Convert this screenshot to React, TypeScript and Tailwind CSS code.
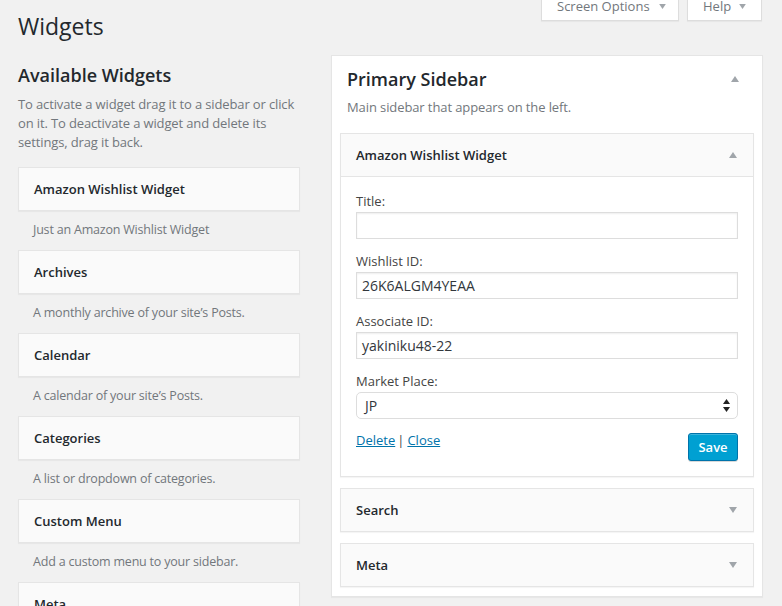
import React from "react";

const Tri = ({ up, color = "#a0a5aa", w = 8, h = 6 }: { up?: boolean; color?: string; w?: number; h?: number }) => (
  <svg width={w} height={h} viewBox="0 0 8 6" className="shrink-0">
    <path d={up ? "M4 0L8 6H0Z" : "M0 0H8L4 6Z"} fill={color} />
  </svg>
);

const available = [
  { t: "Amazon Wishlist Widget", d: "Just an Amazon Wishlist Widget" },
  { t: "Archives", d: "A monthly archive of your site\u2019s Posts." },
  { t: "Calendar", d: "A calendar of your site\u2019s Posts." },
  { t: "Categories", d: "A list or dropdown of categories." },
  { t: "Custom Menu", d: "Add a custom menu to your sidebar." },
  { t: "Meta", d: "Login, RSS, & WordPress.org links." },
];

const Field = ({ label, value }: { label: string; value: string }) => (
  <div>
    <label className="block text-[13px] leading-[19px] text-[#444]">{label}</label>
    <div className="mt-[1px] h-[27px] border border-[#ddd] bg-white shadow-[inset_0_1px_2px_rgba(0,0,0,0.07)] px-[5px] flex items-center text-[14px] text-[#32373c]">
      {value}
    </div>
  </div>
);

const ClosedWidget = ({ title }: { title: string }) => (
  <div className="mt-[11px] border border-[#e5e5e5] bg-[#fafafa] shadow-[0_1px_1px_rgba(0,0,0,0.04)] pl-[15px] pr-[16px] py-[14px] flex items-center justify-between">
    <span className="text-[13px] leading-[14px] font-semibold text-[#23282d]">{title}</span>
    <Tri />
  </div>
);

export default function App() {
  return (
    <div className="h-[606px] overflow-hidden bg-[#f1f1f1] font-['Open_Sans',sans-serif] text-[#444]">
      <div className="flex justify-between pl-[18px] pr-[20px]">
        <h1 className="mt-[11px] text-[23px] leading-[30px] text-[#23282d]">Widgets</h1>
        <div className="flex gap-[8px] -mt-[7px] h-[28px]">
          <div className="w-[138px] h-[28px] bg-white border border-[#ddd] border-t-0 shadow-[0_1px_1px_rgba(0,0,0,0.04)] pl-[15px] flex items-center gap-[9px] text-[13px] leading-[19px] text-[#72777c]">
            <span>Screen Options</span>
            <Tri color="#a0a5aa" w={7} h={5} />
          </div>
          <div className="w-[75px] h-[28px] bg-white border border-[#ddd] border-t-0 shadow-[0_1px_1px_rgba(0,0,0,0.04)] pl-[15px] flex items-center gap-[8px] text-[13px] leading-[19px] text-[#72777c]">
            <span>Help</span>
            <Tri color="#a0a5aa" w={7} h={5} />
          </div>
        </div>
      </div>

      <div className="flex pl-[18px] pr-[19px] mt-[14px] gap-[31px] items-start">
        <div className="w-[282px] shrink-0 mt-[8px]">
          <h2 className="text-[18px] leading-[24px] font-semibold text-[#23282d]">Available Widgets</h2>
          <p className="mt-[8px] text-[13px] leading-[19px] tracking-[-0.13px] text-[#72777c]">
            To activate a widget drag it to a sidebar or click on it. To deactivate a widget and delete its settings, drag it back.
          </p>
          <div className="mt-[15px]">
            {available.map((w) => (
              <div key={w.t}>
                <div className="border border-[#e5e5e5] bg-[#fafafa] shadow-[0_1px_1px_rgba(0,0,0,0.04)] px-[15px] py-[14px] text-[13px] leading-[14px] font-semibold text-[#23282d]">
                  {w.t}
                </div>
                <div className="px-[15px] pt-[9px] pb-[11px] text-[12.5px] leading-[19px] tracking-[-0.2px] text-[#72777c]">{w.d}</div>
              </div>
            ))}
          </div>
        </div>

        <div className="flex-1 bg-white border border-[#e5e5e5] shadow-[0_1px_1px_rgba(0,0,0,0.04)] pt-[11px] px-[8px] pb-[9px]">
          <div className="flex items-center justify-between pl-[7px] pr-[15px]">
            <h2 className="text-[18px] leading-[24px] font-semibold text-[#23282d]">Primary Sidebar</h2>
            <Tri up />
          </div>
          <p className="mt-[7px] pl-[7px] text-[13px] leading-[19px] tracking-[-0.1px] text-[#72777c]">Main sidebar that appears on the left.</p>

          <div className="mt-[16px] border border-[#e5e5e5] bg-white shadow-[0_1px_1px_rgba(0,0,0,0.04)]">
            <div className="bg-[#fafafa] border-b border-[#e5e5e5] pl-[15px] pr-[16px] py-[14px] flex items-center justify-between">
              <span className="text-[13px] leading-[14px] font-semibold text-[#23282d]">Amazon Wishlist Widget</span>
              <Tri up />
            </div>
            <div className="px-[15px] pt-[15px] pb-[15px]">
              <div className="flex flex-col gap-[13px]">
                <Field label="Title:" value="" />
                <Field label="Wishlist ID:" value="26K6ALGM4YEAA" />
                <Field label="Associate ID:" value="yakiniku48-22" />
                <div>
                  <label className="block text-[13px] leading-[19px] text-[#444]">Market Place:</label>
                  <div className="mt-[1px] h-[27px] border border-[#ddd] rounded-[5px] bg-white pl-[8px] pr-[7px] flex items-center justify-between text-[14px] text-[#32373c]">
                    <span>JP</span>
                    <svg width="7" height="13" viewBox="0 0 7 13">
                      <path d="M3.5 0L7 5H0Z" fill="#222" />
                      <path d="M0 8H7L3.5 13Z" fill="#222" />
                    </svg>
                  </div>
                </div>
              </div>
              <div className="mt-[12px] flex justify-between items-start">
                <div className="text-[13px] leading-[19px] text-[#444]">
                  <a href="#" className="text-[#0073aa] underline">Delete</a>
                  <span className="ml-[2px] mr-[3px]">|</span>
                  <a href="#" className="text-[#0073aa] underline">Close</a>
                </div>
                <button className="mt-[2px] h-[28px] w-[50px] rounded-[3px] bg-[#00a0d2] border border-[#0073aa] shadow-[inset_0_1px_0_rgba(120,200,230,0.5),0_1px_0_rgba(0,0,0,0.15)] text-white text-[13px] font-semibold leading-[26px]">
                  Save
                </button>
              </div>
            </div>
          </div>

          <ClosedWidget title="Search" />
          <ClosedWidget title="Meta" />
        </div>
      </div>
    </div>
  );
}
